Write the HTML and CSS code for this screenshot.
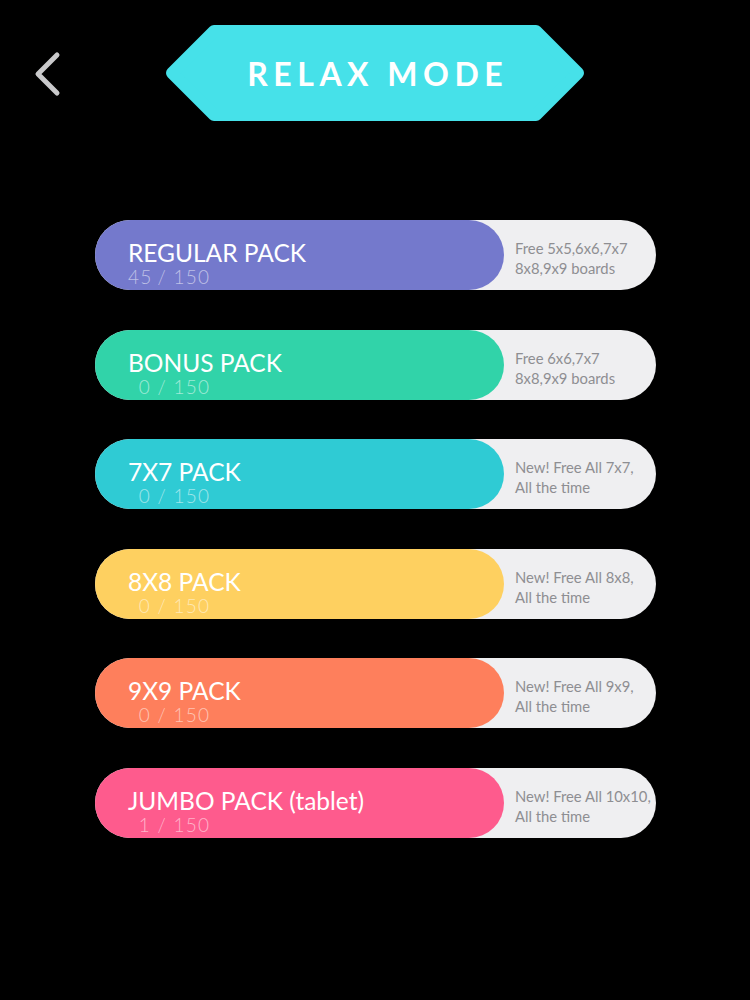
FILE: index.html
```html
<!DOCTYPE html>
<html>
<head>
<meta charset="utf-8">
<link rel="stylesheet" href="styles.css">
</head>
<body>
<div class="screen">
  <header class="header">
    <svg class="back" width="34" height="50" viewBox="0 0 34 50">
      <polyline points="26,4 7,23 26,42" fill="none" stroke="#c9c9cb" stroke-width="5" stroke-linecap="round" stroke-linejoin="round"/>
    </svg>
    <div class="banner">
      <svg class="banner-bg" width="418" height="96" viewBox="0 0 418 96">
        <polygon points="48,6 370,6 412,48 370,90 48,90 6,48" fill="#46e1e9" stroke="#46e1e9" stroke-width="12" stroke-linejoin="round"/>
      </svg>
      <span class="banner-text">RELAX MODE</span>
    </div>
  </header>

  <main class="packs">
    <div class="pack">
      <div class="pack-main regular">
        <div class="pack-title">REGULAR PACK</div>
        <div class="pack-count"><span class="num">45</span> / 150</div>
      </div>
      <div class="pack-info">Free 5x5,6x6,7x7<br>8x8,9x9 boards</div>
    </div>
    <div class="pack">
      <div class="pack-main bonus">
        <div class="pack-title">BONUS PACK</div>
        <div class="pack-count"><span class="num">0</span> / 150</div>
      </div>
      <div class="pack-info">Free 6x6,7x7<br>8x8,9x9 boards</div>
    </div>
    <div class="pack">
      <div class="pack-main p7">
        <div class="pack-title">7X7 PACK</div>
        <div class="pack-count"><span class="num">0</span> / 150</div>
      </div>
      <div class="pack-info">New! Free All 7x7,<br>All the time</div>
    </div>
    <div class="pack">
      <div class="pack-main p8">
        <div class="pack-title">8X8 PACK</div>
        <div class="pack-count"><span class="num">0</span> / 150</div>
      </div>
      <div class="pack-info">New! Free All 8x8,<br>All the time</div>
    </div>
    <div class="pack">
      <div class="pack-main p9">
        <div class="pack-title">9X9 PACK</div>
        <div class="pack-count"><span class="num">0</span> / 150</div>
      </div>
      <div class="pack-info">New! Free All 9x9,<br>All the time</div>
    </div>
    <div class="pack">
      <div class="pack-main jumbo">
        <div class="pack-title">JUMBO PACK (tablet)</div>
        <div class="pack-count"><span class="num">1</span> / 150</div>
      </div>
      <div class="pack-info">New! Free All 10x10,<br>All the time</div>
    </div>
  </main>
</div>
</body>
</html>
```

FILE: styles.css
```css
html, body {
  margin: 0;
  padding: 0;
  background: #000;
}

.screen {
  width: 750px;
  height: 1000px;
  background: #000;
  font-family: Lato, "Open Sans", sans-serif;
}

.header {
  display: flex;
  align-items: center;
  padding-top: 25px;
  height: 96px;
}

.back {
  margin-left: 31px;
  margin-top: 6px;
  display: block;
}

.banner {
  position: relative;
  margin-left: 101px;
  width: 418px;
  height: 96px;
  display: flex;
  align-items: center;
  justify-content: center;
}

.banner-bg {
  position: absolute;
  left: 0;
  top: 0;
}

.banner-text {
  position: relative;
  color: #fff;
  font-family: Lato, sans-serif;
  font-weight: 700;
  font-size: 32px;
  letter-spacing: 5.5px;
  padding-left: 5.5px;
  margin-top: 0;
}

.packs {
  display: flex;
  flex-direction: column;
  gap: 39.6px;
  margin-top: 99px;
  padding-left: 95px;
}

.pack {
  width: 561px;
  height: 70px;
  border-radius: 35px;
  background: #efeff1;
  display: flex;
  align-items: center;
}

.pack-main {
  width: 409px;
  height: 70px;
  border-radius: 35px;
  box-sizing: border-box;
  padding-left: 33px;
  padding-top: 21px;
  color: #fff;
  flex-shrink: 0;
}

.pack-title {
  font-size: 24.5px;
  line-height: 24px;
  font-weight: 400;
  white-space: nowrap;
}

.pack-count {
  font-size: 19px;
  line-height: 24px;
  font-weight: 300;
  letter-spacing: 1.3px;
  color: rgba(255, 255, 255, 0.55);
  white-space: nowrap;
}

.pack-count .num {
  display: inline-block;
  width: 23px;
  text-align: right;
}

.pack-info {
  margin-left: 11px;
  margin-top: 6px;
  font-size: 14.8px;
  line-height: 20px;
  color: #8e8e92;
  white-space: nowrap;
}

.regular { background: #7479cc; }
.bonus { background: #31d3a9; }
.p7 { background: #2fcbd4; }
.p8 { background: #fed060; }
.p9 { background: #fe7f5c; }
.jumbo { background: #fe5b8d; }
```
